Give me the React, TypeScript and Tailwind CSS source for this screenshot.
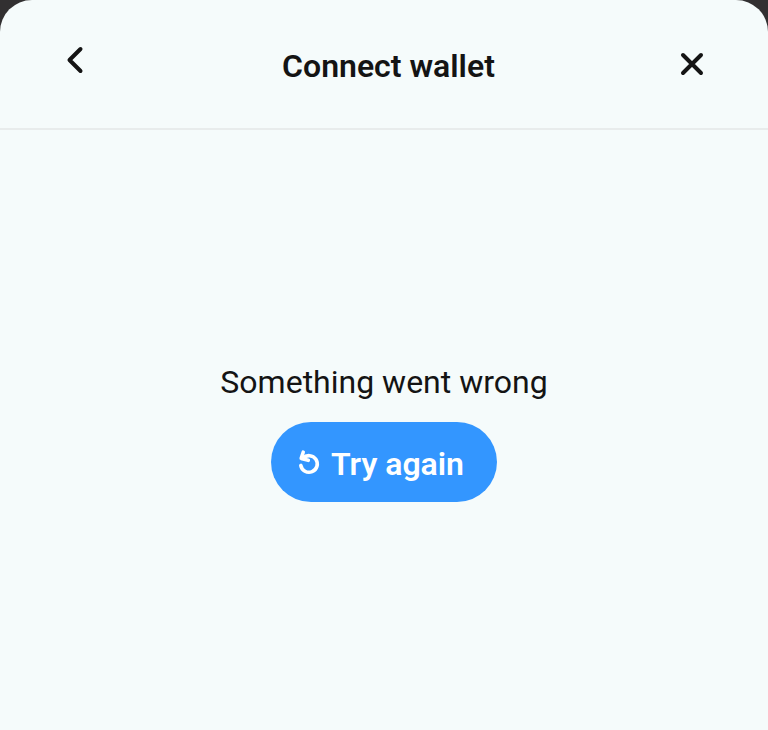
function BackIcon() {
  return (
    <svg className="block" width="32" height="32" viewBox="0 0 32 32" fill="none" stroke="#141414" strokeWidth="4" strokeLinecap="round" strokeLinejoin="round">
      <path d="M21.5 5 10.5 16l11 11" />
    </svg>
  );
}

function CloseIcon() {
  return (
    <svg className="block" width="32" height="32" viewBox="0 0 32 32" fill="none" stroke="#141414" strokeWidth="4" strokeLinecap="round">
      <path d="m7 7 18 18M25 7 7 25" />
    </svg>
  );
}

function RetryIcon() {
  return (
    <svg className="block" width="24" height="28" viewBox="0 0 24 28" fill="none" stroke="#ffffff" strokeWidth="3.6" strokeLinecap="round" strokeLinejoin="round">
      <path d="M3.8 17.4a8.3 8.3 0 1 0 2.2-7.2" />
      <path d="M6.2 4.2 4.2 10.4l7.1 1.9" />
      <path d="M6 5.5 5 10.4l3.6-.5" strokeWidth="2" />
    </svg>
  );
}

export default function App() {
  return (
    <div className="h-[730px] w-[768px] overflow-hidden bg-[#323031] font-[Roboto,sans-serif] text-[#141414]">
      <div className="flex h-full flex-col rounded-t-[32px] bg-[#f5fbfb]">
        <header className="flex h-[130px] shrink-0 items-start justify-between border-b-2 border-[#e8ecec] pr-[60px] pl-[59px]">
          <button className="mt-[44px]" aria-label="Back">
            <BackIcon />
          </button>
          <h1 className="mt-[46px] pl-[10px] text-[32px] leading-10 font-semibold whitespace-nowrap">Connect wallet</h1>
          <button className="mt-[48px]" aria-label="Close">
            <CloseIcon />
          </button>
        </header>
        <main className="flex flex-col items-center pt-[232px]">
          <p className="text-[32px] leading-10 whitespace-nowrap">Something went wrong</p>
          <button className="mt-5 flex h-20 w-[226px] items-center rounded-full bg-[#3396ff] pl-[26px] text-white">
            <RetryIcon />
            <span className="ml-[10px] pt-1 text-[32px] leading-10 font-semibold whitespace-nowrap">Try again</span>
          </button>
        </main>
      </div>
    </div>
  );
}
